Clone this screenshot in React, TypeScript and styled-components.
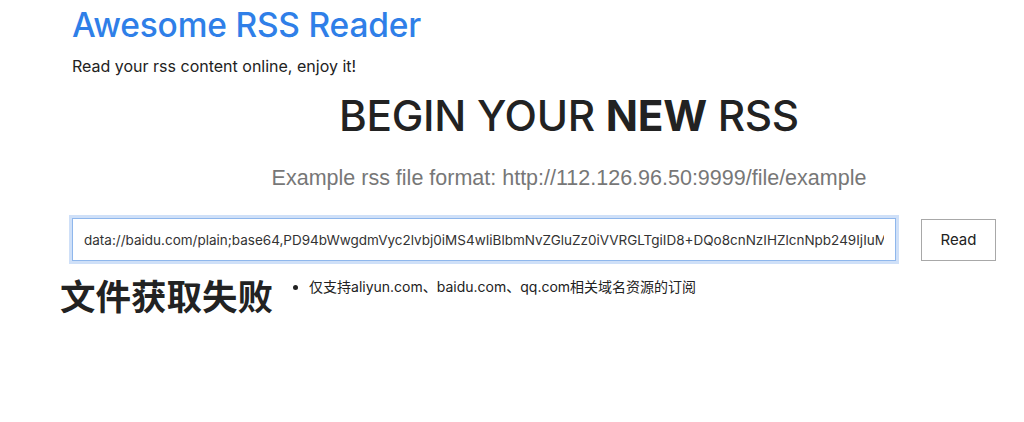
import React from 'react';
import styled, { createGlobalStyle } from 'styled-components';

const GlobalStyle = createGlobalStyle`
  html, body {
    margin: 0;
    padding: 0;
    background: #ffffff;
    overflow: hidden;
  }
  body {
    font-family: Inter, "Noto Sans", sans-serif;
    color: #222222;
  }
`;

const Page = styled.div`
  width: 1024px;
  height: 422px;
  display: flex;
  flex-direction: column;
`;

const Header = styled.header`
  display: flex;
  flex-direction: column;
  padding: 0 0 0 72px;
`;

const Title = styled.h1`
  margin: 3px 0 0 0;
  font-size: 33.5px;
  line-height: 44px;
  font-weight: 500;
  color: #2f7fe8;
  letter-spacing: -0.2px;
`;

const Subtitle = styled.p`
  margin: 9px 0 0 0;
  font-size: 16px;
  line-height: 20px;
  color: #222222;
`;

const Hero = styled.section`
  display: flex;
  flex-direction: column;
  align-items: center;
  padding-left: 114px;
`;

const Heading = styled.h2`
  margin: 12px 0 0 0;
  font-size: 42.3px;
  line-height: 56px;
  font-weight: 500;
  color: #222222;
  letter-spacing: -0.3px;

  strong {
    font-weight: 700;
  }
`;

const Example = styled.p`
  margin: 21px 0 0 0;
  font-family: "Liberation Sans", Arial, sans-serif;
  font-size: 21.5px;
  line-height: 26px;
  color: #777777;
`;

const Form = styled.form`
  display: flex;
  align-items: center;
  gap: 25px;
  margin: 27px 0 0 72px;
`;

const UrlInput = styled.input`
  box-sizing: border-box;
  width: 824px;
  height: 43px;
  padding: 0 11px;
  border: 1px solid #8fb7ec;
  box-shadow: 0 0 0 3px #cfe0f8;
  outline: none;
  font-family: Inter, "Noto Sans", sans-serif;
  font-size: 13.5px;
  color: #333333;
  background: #ffffff;
`;

const ReadButton = styled.button`
  box-sizing: border-box;
  width: 75px;
  height: 42px;
  border: 1px solid #a8a8a8;
  background: #ffffff;
  font-family: Inter, "Noto Sans", sans-serif;
  font-size: 15px;
  color: #222222;
  cursor: pointer;
`;

const Result = styled.section`
  display: flex;
  align-items: flex-start;
  gap: 12px;
  margin: 16px 0 0 60px;
`;

const ErrorText = styled.h3`
  margin: 0;
  font-family: Inter, "Noto Sans CJK SC", sans-serif;
  font-size: 35.5px;
  line-height: 42px;
  font-weight: 700;
  color: #222222;
`;

const Notes = styled.ul`
  margin: 1px 0 0 0;
  padding: 0 0 0 24px;
  font-family: Inter, "Noto Sans CJK SC", sans-serif;
  font-size: 14px;
  line-height: 18px;
  color: #222222;
`;

const App: React.FC = () => {
  const [url, setUrl] = React.useState(
    'data://baidu.com/plain;base64,PD94bWwgdmVyc2lvbj0iMS4wIiBlbmNvZGluZz0iVVRGLTgiID8+DQo8cnNzIHZlcnNpb249IjIuMCI+'
  );

  return (
    <Page>
      <GlobalStyle />
      <Header>
        <Title>Awesome RSS Reader</Title>
        <Subtitle>Read your rss content online, enjoy it!</Subtitle>
      </Header>
      <Hero>
        <Heading>
          BEGIN YOUR <strong>NEW</strong> RSS
        </Heading>
        <Example>Example rss file format: http://112.126.96.50:9999/file/example</Example>
      </Hero>
      <Form onSubmit={(e) => e.preventDefault()}>
        <UrlInput value={url} onChange={(e) => setUrl(e.target.value)} />
        <ReadButton type="submit">Read</ReadButton>
      </Form>
      <Result>
        <ErrorText>文件获取失败</ErrorText>
        <Notes>
          <li>仅支持aliyun.com、baidu.com、qq.com相关域名资源的订阅</li>
        </Notes>
      </Result>
    </Page>
  );
};

export default App;
